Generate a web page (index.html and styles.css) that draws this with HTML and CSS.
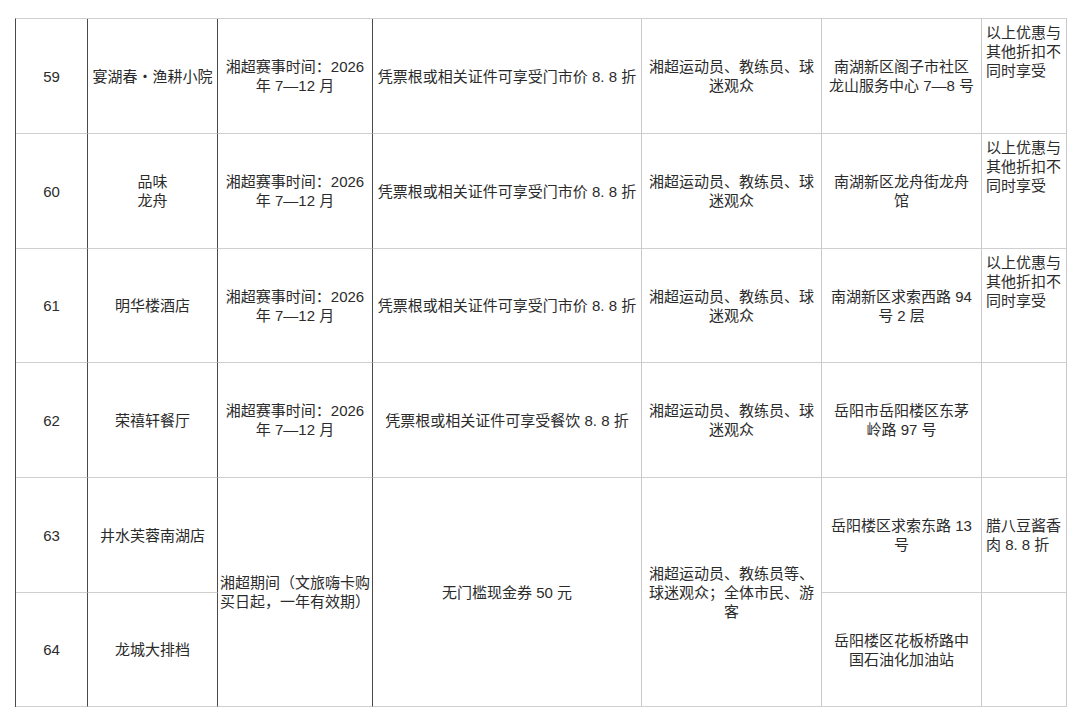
FILE: index.html
```html
<!DOCTYPE html>
<html lang="zh-CN">
<head>
<meta charset="utf-8">
<title>湘超优惠商家</title>
<link rel="stylesheet" href="styles.css">
</head>
<body>
<div class="page">
<table class="grid">
  <colgroup>
    <col class="c-no">
    <col class="c-name">
    <col class="c-time">
    <col class="c-offer">
    <col class="c-who">
    <col class="c-addr">
    <col class="c-note">
  </colgroup>
  <tbody>
    <tr>
      <td class="no">59</td>
      <td class="name">宴湖春・渔耕小院</td>
      <td class="time">湘超赛事时间：2026<br>年 7—12 月</td>
      <td class="offer">凭票根或相关证件可享受门市价 8. 8 折</td>
      <td class="who">湘超运动员、教练员、球<br>迷观众</td>
      <td class="addr">南湖新区阁子市社区<br>龙山服务中心 7—8 号</td>
      <td class="note top">以上优惠与<br>其他折扣不<br>同时享受</td>
    </tr>
    <tr>
      <td class="no">60</td>
      <td class="name">品味<br>龙舟</td>
      <td class="time">湘超赛事时间：2026<br>年 7—12 月</td>
      <td class="offer">凭票根或相关证件可享受门市价 8. 8 折</td>
      <td class="who">湘超运动员、教练员、球<br>迷观众</td>
      <td class="addr">南湖新区龙舟街龙舟<br>馆</td>
      <td class="note top">以上优惠与<br>其他折扣不<br>同时享受</td>
    </tr>
    <tr>
      <td class="no">61</td>
      <td class="name">明华楼酒店</td>
      <td class="time">湘超赛事时间：2026<br>年 7—12 月</td>
      <td class="offer">凭票根或相关证件可享受门市价 8. 8 折</td>
      <td class="who">湘超运动员、教练员、球<br>迷观众</td>
      <td class="addr">南湖新区求索西路 94<br>号 2 层</td>
      <td class="note top">以上优惠与<br>其他折扣不<br>同时享受</td>
    </tr>
    <tr>
      <td class="no">62</td>
      <td class="name">荣禧轩餐厅</td>
      <td class="time">湘超赛事时间：2026<br>年 7—12 月</td>
      <td class="offer">凭票根或相关证件可享受餐饮 8. 8 折</td>
      <td class="who">湘超运动员、教练员、球<br>迷观众</td>
      <td class="addr">岳阳市岳阳楼区东茅<br>岭路 97 号</td>
      <td class="note"></td>
    </tr>
    <tr>
      <td class="no">63</td>
      <td class="name">井水芙蓉南湖店</td>
      <td class="time" rowspan="2">湘超期间（文旅嗨卡购<br>买日起，一年有效期）</td>
      <td class="offer" rowspan="2">无门槛现金券 50 元</td>
      <td class="who" rowspan="2">湘超运动员、教练员等、<br>球迷观众；全体市民、游<br>客</td>
      <td class="addr">岳阳楼区求索东路 13<br>号</td>
      <td class="note">腊八豆酱香<br>肉 8. 8 折</td>
    </tr>
    <tr>
      <td class="no">64</td>
      <td class="name">龙城大排档</td>
      <td class="addr">岳阳楼区花板桥路中<br>国石油化加油站</td>
      <td class="note"></td>
    </tr>
  </tbody>
</table>
</div>
</body>
</html>
```

FILE: styles.css
```css
html, body {
  margin: 0;
  padding: 0;
  background: #ffffff;
}

.page {
  padding: 18px 0 0 15px;
}

.grid {
  border-collapse: separate;
  border-spacing: 0;
  table-layout: fixed;
  width: 1052px;
  border-left: 1px solid #4a4a4a;
  border-top: 1px solid #cfcfcf;
  font-family: "Liberation Sans", "Noto Sans CJK SC", sans-serif;
  font-size: 15px;
  line-height: 19px;
  color: #2b2b2b;
}

.c-no { width: 72px; }
.c-name { width: 130px; }
.c-time { width: 155px; }
.c-offer { width: 269px; }
.c-who { width: 180px; }
.c-addr { width: 160px; }
.c-note { width: 85px; }

.grid tr {
  height: 115px;
}

.grid tr:nth-child(3n) {
  height: 114px;
}

.grid td {
  padding: 0 2px;
  border-right: 1px solid #c9c9c9;
  border-bottom: 1px solid #cfcfcf;
  text-align: center;
  vertical-align: middle;
  white-space: nowrap;
  overflow: hidden;
}

.grid td.no,
.grid td.name,
.grid td.time {
  border-right-color: #4a4a4a;
}

.grid td.note {
  text-align: left;
  padding: 0 4px;
}

.grid td.note.top {
  vertical-align: top;
  padding-top: 4px;
}
```
